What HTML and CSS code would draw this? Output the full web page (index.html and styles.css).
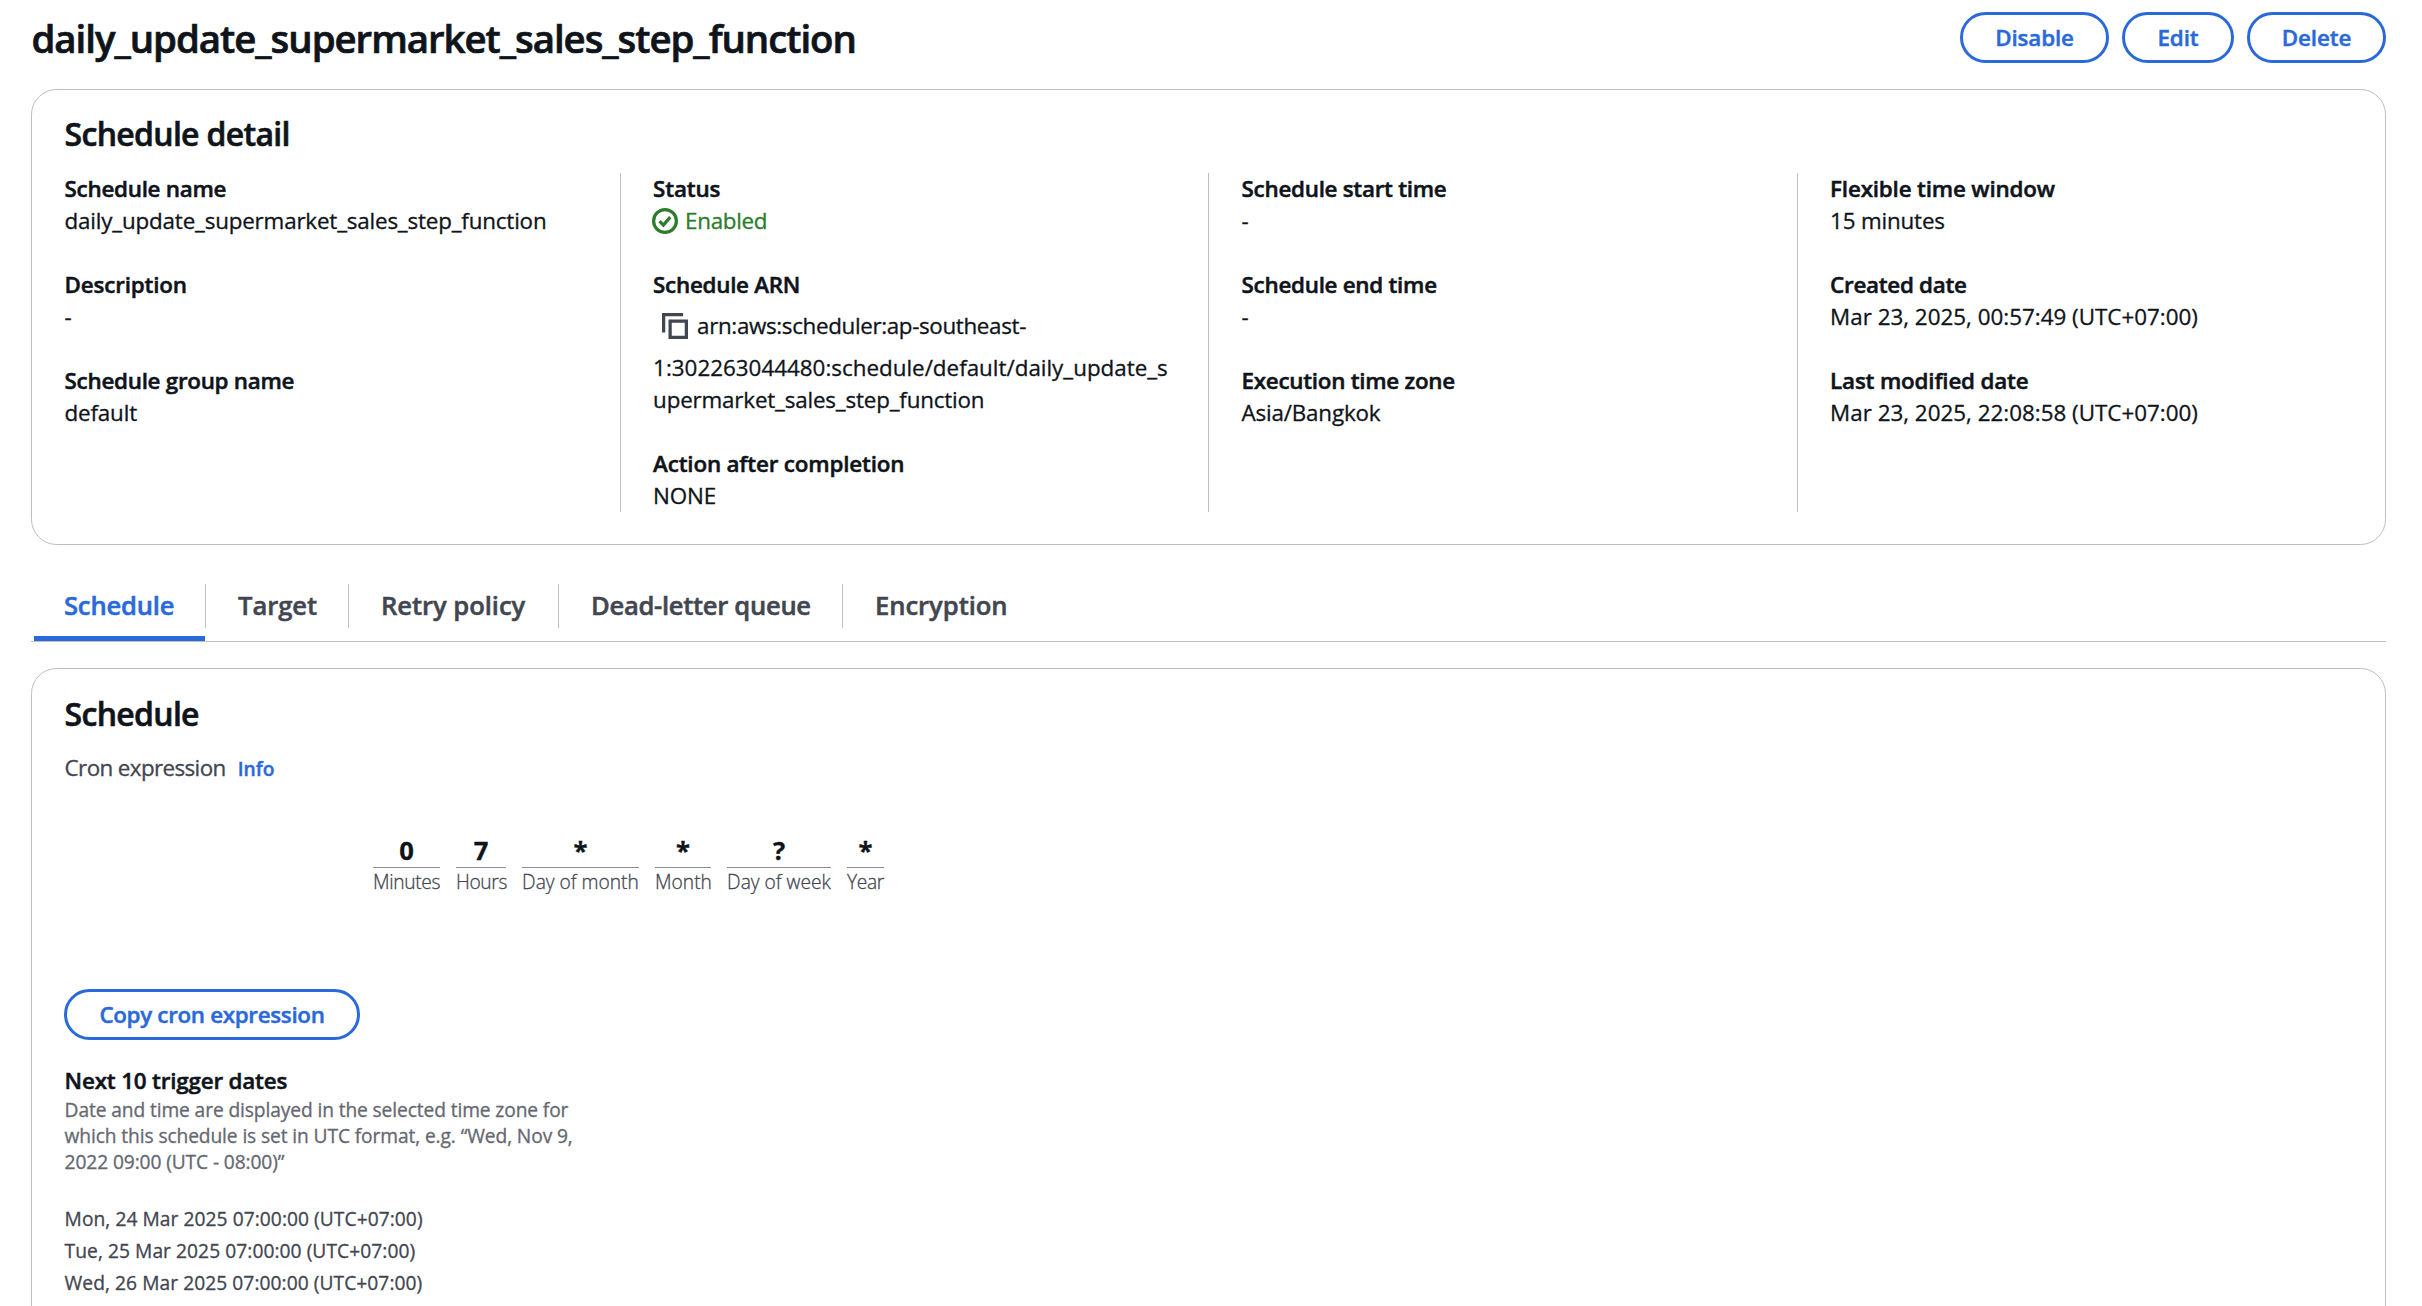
FILE: index.html
```html
<!DOCTYPE html>
<html lang="en">
<head>
<meta charset="utf-8">
<title>daily_update_supermarket_sales_step_function</title>
<link rel="stylesheet" href="styles.css">
</head>
<body>
<main class="page">
  <header class="page-header">
    <h1>daily_update_supermarket_sales_step_function</h1>
    <div class="actions">
      <button class="btn btn-disable">Disable</button>
      <button class="btn btn-edit">Edit</button>
      <button class="btn btn-delete">Delete</button>
    </div>
  </header>

  <section class="card detail">
    <h2>Schedule detail</h2>
    <div class="columns">
      <dl class="column">
        <div class="pair"><dt class="tight">Schedule name</dt><dd>daily_update_supermarket_sales_step_function</dd></div>
        <div class="pair"><dt>Description</dt><dd>-</dd></div>
        <div class="pair"><dt class="tight">Schedule group name</dt><dd>default</dd></div>
      </dl>
      <dl class="column">
        <div class="pair"><dt>Status</dt><dd class="status">
          <svg class="icon" viewBox="0 0 16 16"><circle cx="8" cy="8" r="7"/><path d="M4.6 8.1l2.4 2.4 4.2-4.9"/></svg>Enabled</dd></div>
        <div class="pair"><dt class="tight">Schedule ARN</dt><dd>
          <div class="arn-first"><svg class="icon" viewBox="0 0 16 16"><path d="M1 12V1h12"/><path d="M5 5h10v10H5z"/></svg>arn:aws:scheduler:ap-southeast-</div>
          <div class="arn-rest">1:302263044480:schedule/default/daily_update_s</div>
          <div>upermarket_sales_step_function</div></dd></div>
        <div class="pair"><dt>Action after completion</dt><dd>NONE</dd></div>
      </dl>
      <dl class="column">
        <div class="pair"><dt class="tight">Schedule start time</dt><dd>-</dd></div>
        <div class="pair"><dt class="tight">Schedule end time</dt><dd>-</dd></div>
        <div class="pair"><dt class="tight">Execution time zone</dt><dd>Asia/Bangkok</dd></div>
      </dl>
      <dl class="column">
        <div class="pair"><dt>Flexible time window</dt><dd>15 minutes</dd></div>
        <div class="pair"><dt class="tight">Created date</dt><dd class="date">Mar 23, 2025, 00:57:49 (UTC+07:00)</dd></div>
        <div class="pair"><dt>Last modified date</dt><dd class="date">Mar 23, 2025, 22:08:58 (UTC+07:00)</dd></div>
      </dl>
    </div>
  </section>

  <nav class="tabs">
    <a class="tab active"><span>Schedule</span></a>
    <a class="tab"><span>Target</span></a>
    <a class="tab"><span>Retry policy</span></a>
    <a class="tab tight"><span>Dead-letter queue</span></a>
    <a class="tab"><span>Encryption</span></a>
  </nav>

  <section class="card schedule">
    <h2>Schedule</h2>
    <div class="cron-label"><span>Cron expression</span><a class="info">Info</a></div>
    <div class="cron">
      <div class="field"><b>0</b><span class="tight">Minutes</span></div>
      <div class="field"><b>7</b><span class="tight">Hours</span></div>
      <div class="field"><b>*</b><span>Day of month</span></div>
      <div class="field"><b>*</b><span>Month</span></div>
      <div class="field"><b>?</b><span>Day of week</span></div>
      <div class="field"><b>*</b><span class="tight">Year</span></div>
    </div>
    <button class="btn btn-copy">Copy cron expression</button>
    <h3>Next 10 trigger dates</h3>
    <p class="hint">Date and time are displayed in the selected time zone for<br>which this schedule is set in UTC format, e.g. “Wed, Nov 9,<br>2022 09:00 (UTC - 08:00)”</p>
    <ul class="dates">
      <li>Mon, 24 Mar 2025 07:00:00 (UTC+07:00)</li>
      <li>Tue, 25 Mar 2025 07:00:00 (UTC+07:00)</li>
      <li>Wed, 26 Mar 2025 07:00:00 (UTC+07:00)</li>
    </ul>
  </section>
</main>
</body>
</html>
```
FILE: styles.css
```css
* { box-sizing: border-box; margin: 0; padding: 0; }

html, body { height: 100%; }

body {
  background: #fff;
  color: #0f141a;
  font: 400 22.4px/32px "Open Sans", "Noto Sans", sans-serif;
  letter-spacing: -0.18px;
  -webkit-text-stroke: 0.3px;
  overflow: hidden;
}

.page { padding: 12px 36px 0 31px; height: 1306px; overflow: hidden; }

.page-header { display: flex; justify-content: space-between; height: 77px; }
h1 { font-size: 38.4px; line-height: 48px; font-weight: 600; letter-spacing: -1.03px; white-space: nowrap; margin: 2px 0 0 0.5px; -webkit-text-stroke: 0.7px; }

.actions { display: flex; gap: 13px; }
.btn {
  height: 51px;
  padding-top: 1px;
  border: 3px solid #2a69d9;
  border-radius: 26px;
  background: #fff;
  color: #2a69d9;
  font: 600 22.4px/32px "Open Sans", "Noto Sans", sans-serif;
  letter-spacing: -0.13px;
  text-align: center;
  white-space: nowrap;
  -webkit-text-stroke: 0.45px;
}
.btn-disable { width: 149px; }
.btn-edit { width: 112px; }
.btn-delete { width: 139px; }

.card { border: 1px solid #bebec5; border-radius: 25.6px; }
h2 { font-size: 32px; line-height: 40px; font-weight: 600; letter-spacing: -0.7px; -webkit-text-stroke: 0.6px; }

.detail { height: 456px; padding: 24px 0 0 32.6px; }
.columns { display: grid; grid-template-columns: 588.5px 588.5px 588.5px 1fr; height: 339px; margin-top: 19px; }
.column { display: flex; flex-direction: column; gap: 32px; }
.column + .column { margin-left: -33.6px; padding-left: 32.6px; border-left: 1px solid #bebec5; }
dt, h3 { font-size: 22.4px; line-height: 32px; font-weight: 600; letter-spacing: -0.18px; -webkit-text-stroke: 0.5px; }
dt.tight { letter-spacing: -0.28px; }
.date { letter-spacing: 0; }

.icon { width: 26px; height: 26px; fill: none; stroke: currentColor; stroke-width: 2; flex: none; }
.status { display: flex; align-items: center; color: #2b7d2b; letter-spacing: -0.32px; }
.status .icon { margin: 0 7px 0 -1px; }
.arn-first { display: flex; align-items: center; height: 51px; padding: 0 0 1px 9px; letter-spacing: -0.35px; }
.arn-first .icon { color: #424650; margin-right: 9px; }
.arn-rest { letter-spacing: 0; }

.tabs { display: flex; height: 61px; margin-top: 36px; border-bottom: 1px solid #bebec5; }
.tab {
  height: 60px;
  padding: 3px 0 13px;
  color: #424650;
  font-size: 25.6px;
  font-weight: 600;
  letter-spacing: -0.05px;
  white-space: nowrap;
  -webkit-text-stroke: 0.5px;
}
.tab span { display: block; height: 44px; line-height: 44px; padding-left: 32px; border-right: 1px solid #bebec5; }
.tab:nth-child(1) { width: 175px; letter-spacing: -0.2px; }
.tab:nth-child(2) { width: 143px; }
.tab:nth-child(3) { width: 210px; }
.tab:nth-child(4) { width: 284px; }
.tab.tight { letter-spacing: -0.31px; }
.tab:first-child span { padding-left: 33px; }
.tab:last-child span { border-right: 0; }
.tab.active { color: #2a69d9; background: linear-gradient(#2a69d9, #2a69d9) 3px 100% / 171px 5px no-repeat; }

.schedule { height: 700px; margin-top: 26px; padding: 25px 0 0 32.6px; }
.cron-label { display: flex; gap: 12px; margin-top: 18px; color: #424650; letter-spacing: -0.61px; }
.info { color: #2a69d9; font-size: 19.2px; font-weight: 600; letter-spacing: 0; line-height: 34px; -webkit-text-stroke: 0.4px; }
.cron { display: grid; grid-template-columns: 67px 50px 117px 56px 104px 37px; gap: 16px; margin: 48px 0 0 308.4px; }
.field { display: flex; flex-direction: column; text-align: center; }
.field b { font-size: 25.6px; line-height: 34px; height: 34px; border-bottom: 1px solid #8c8c94; }
.field span { color: #424650; font-size: 19.2px; line-height: 27px; font-weight: 300; white-space: nowrap; letter-spacing: 0; }
.field .tight { letter-spacing: -0.35px; }
.btn-copy { display: block; width: 296px; margin: 94px 0 0 -0.6px; letter-spacing: -0.33px; }
h3 { margin-top: 25px; }
.hint { color: #656871; font-size: 19.2px; line-height: 26px; letter-spacing: -0.11px; }
.dates { list-style: none; margin-top: 28px; color: #424650; font-size: 19.2px; line-height: 32px; letter-spacing: 0.06px; }
```
